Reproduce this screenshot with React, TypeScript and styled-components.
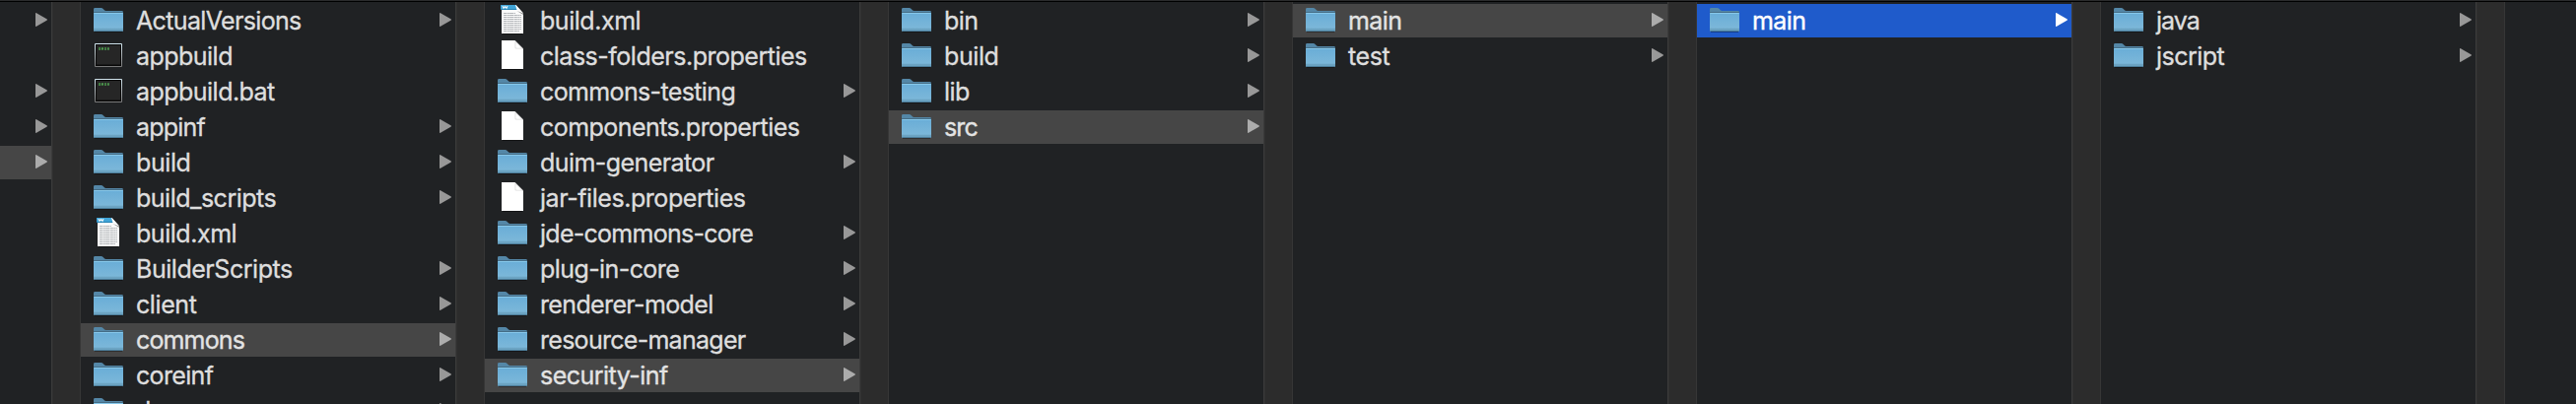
import React from 'react';
import styled, { createGlobalStyle } from 'styled-components';

const GlobalStyle = createGlobalStyle`
  html, body { margin: 0; padding: 0; background: #202224; overflow: hidden; }
`;

type Kind = 'folder' | 'exec' | 'word' | 'file';
type Highlight = 'none' | 'path' | 'active';
interface Entry { name: string; kind?: Kind; highlight?: Highlight; spacing?: number; blank?: boolean }

const Browser = styled.main`
  width: 2614px;
  height: 410px;
  box-sizing: border-box;
  border-top: 1px solid #2b2c2d;
  display: flex;
  overflow: hidden;
  background: #202224;
  font-family: Inter, 'Liberation Sans', sans-serif;
`;

const Pane = styled.section<{ $width: number }>`
  flex: 0 0 ${p => p.$width}px;
  box-sizing: border-box;
  height: 409px;
  padding-top: 2px;
  border-top: 1px solid #000;
  display: flex;
  flex-direction: column;
  gap: 2px;
  overflow: hidden;
`;

const Divider = styled.div`
  flex: 0 0 30px;
  box-sizing: border-box;
  height: 409px;
  border-top: 1px solid #000;
  background: linear-gradient(90deg, #3b3b3b 0 1px, #303030 1px 2px, #2c2c2c 2px 29px, #363636 29px);
`;

const rowColors: Record<Highlight, string> = { none: 'transparent', path: '#464646', active: '#1f5bcb' };

const Row = styled.div<{ $highlight: Highlight }>`
  flex: 0 0 34px;
  height: 34px;
  box-sizing: border-box;
  padding: 0 4px 0 11px;
  display: flex;
  align-items: center;
  background: ${p => rowColors[p.$highlight]};
  color: ${p => (p.$highlight === 'active' ? '#fff' : p.$highlight === 'path' ? '#e3e3e3' : '#dedede')};
`;

const IconSlot = styled.span`
  flex: 0 0 34px;
  height: 34px;
  margin-right: 11px;
  svg { display: block; }
`;

const Label = styled.span<{ $spacing: number }>`
  flex: 1;
  white-space: nowrap;
  font-size: 25px;
  line-height: 34px;
  letter-spacing: ${p => p.$spacing}px;
  -webkit-text-stroke: 0.35px currentColor;
`;

const ArrowSlot = styled.span`
  flex: 0 0 12px;
  height: 34px;
  margin-left: auto;
  svg { display: block; }
`;

const GradientSheet = styled.svg`
  position: absolute;
  width: 0;
  height: 0;
`;

function IconDefs() {
  return (
    <GradientSheet aria-hidden>
      <defs>
        <linearGradient id="folderFace" x1="0" y1="0" x2="0" y2="1">
          <stop offset="0" stopColor="#69add7" />
          <stop offset="0.8" stopColor="#7bb7d9" />
          <stop offset="0.86" stopColor="#6ba3c2" />
          <stop offset="1" stopColor="#6aa3c2" />
        </linearGradient>
        <linearGradient id="frame" x1="0" y1="0" x2="0" y2="1">
          <stop offset="0" stopColor="#d4e9f2" />
          <stop offset="0.5" stopColor="#a9b0b4" />
          <stop offset="1" stopColor="#777" />
        </linearGradient>
      </defs>
    </GradientSheet>
  );
}

function FolderIcon() {
  return (
    <svg width="34" height="34" viewBox="0 0 34 34">
      <path d="M3 28.5h28" stroke="#000" strokeOpacity=".3" />
      <path d="M2 14V5.400Q2 4 3.400 4H9.600Q10.700 4 11.400 4.700L12.900 6.300Q13.500 7 14.500 7H30.600Q32 7 32 8.400V14Z" fill="#5487a7" />
      <path d="M2 10.500H32V12H2Z" fill="#456d86" />
      <path d="M2 8H32V9H2Z" fill="#456d86" />
      <path d="M2 9H32V27Q32 28 31 28H3Q2 28 2 27Z" fill="url(#folderFace)" />
      <path d="M2.500 9.500H31.500" stroke="#87c8ea" />
      <path d="M2.500 27.500H31.500" stroke="#4c7d9a" />
    </svg>
  );
}

function ExecIcon() {
  return (
    <svg width="34" height="34" viewBox="0 0 34 34">
      <rect x="3" y="4" width="28" height="24" rx="1" fill="url(#frame)" />
      <rect x="4" y="5" width="26" height="22" fill="#080808" />
      <rect x="5" y="6" width="24" height="19.500" fill="#262626" />
      <path d="M7 9.500h2.200M10 9.500h2M13 9.500h2M16 9.500h1.800" stroke="#4f9a50" strokeWidth="2.400" />
      <path d="M7 9.300h2.200M10.800 10.500h1M13 9.300h2" stroke="#2c5c2e" strokeWidth=".6" />
    </svg>
  );
}

function FileIcon() {
  return (
    <svg width="34" height="34" viewBox="0 0 34 34">
      <path d="M7 30.500h20" stroke="#000" strokeOpacity=".4" />
      <path d="M6 1H19.500L28 9.500V30H6Z" fill="#fff" />
      <path d="M19.500 1L28 9.500H20.500Q19.500 9.500 19.500 8.500Z" fill="#dedede" />
      <path d="M20.400 3.200L26 8.700H21.300Q20.400 8.700 20.400 8Z" fill="#fff" />
    </svg>
  );
}

function WordIcon() {
  return (
    <svg width="34" height="34" viewBox="0 0 34 34">
      <path d="M7 30.500h20" stroke="#000" strokeOpacity=".4" />
      <path d="M6 1H20.500L28 9.500V30H6Z" fill="#fafafa" />
      <path d="M5 1H20L21.500 6H5Z" fill="#41a5d8" />
      <path d="M5 5.500H21.500" stroke="#2582b4" />
      <path d="M7 2L8 4.500L9.500 2.500L11 4.500L12 2" fill="none" stroke="#e6f4fb" strokeWidth="1.100" />
      <path d="M20.500 1L28 9.500L22 7.500Z" fill="#fff" />
      <path d="M21.500 7L28 9.500V11Z" fill="#909090" />
      <path d="M8 9.500H20M8 11.500H26M8 13.500H26M8 15.500H26M8 17.500H26M8 19.500H26M8 21.500H26M8 23.500H26M8 25.500H26M8 27.500H24" stroke="#a9adb0" strokeDasharray="3.300 .4 2.100 .3 4 .5" strokeWidth=".9" />
    </svg>
  );
}

const icons: Record<Kind, () => React.JSX.Element> = { folder: FolderIcon, exec: ExecIcon, word: WordIcon, file: FileIcon };

function Arrow({ highlight }: { highlight: Highlight }) {
  const fill = highlight === 'active' ? '#fff' : highlight === 'path' ? '#acacac' : '#989898';
  return (
    <ArrowSlot>
      <svg width="12" height="34" viewBox="0 0 12 34">
        <path d="M0 9.800Q0 8.800 1 9.200L11.400 15.300Q12.500 16 11.400 16.700L1 22.800Q0 23.200 0 22.200Z" fill={fill} />
      </svg>
    </ArrowSlot>
  );
}

function EntryRow({ name, kind = 'folder', highlight = 'none', spacing = -0.5, blank }: Entry) {
  const Icon = icons[kind];
  if (blank) return <Row $highlight="none" />;
  return (
    <Row $highlight={highlight}>
      {name && <IconSlot><Icon /></IconSlot>}
      {name && <Label $spacing={spacing}>{name}</Label>}
      {kind === 'folder' && <Arrow highlight={highlight} />}
    </Row>
  );
}

const edge: Entry[] = [
  { name: '' }, { name: '', blank: true }, { name: '' }, { name: '' }, { name: '', highlight: 'path' },
];

const columns: Entry[][] = [
  [
    { name: 'ActualVersions', spacing: -0.65 },
    { name: 'appbuild', kind: 'exec', spacing: -0.53 },
    { name: 'appbuild.bat', kind: 'exec', spacing: -0.53 },
    { name: 'appinf', spacing: -0.8 },
    { name: 'build', spacing: -0.4 },
    { name: 'build_scripts', spacing: -0.5 },
    { name: 'build.xml', kind: 'word', spacing: -0.46 },
    { name: 'BuilderScripts', spacing: -0.46 },
    { name: 'client', spacing: -0.42 },
    { name: 'commons', highlight: 'path', spacing: -0.85 },
    { name: 'coreinf', spacing: -0.66 },
    { name: 'docs' },
  ],
  [
    { name: 'build.xml', kind: 'word', spacing: -0.46 },
    { name: 'class-folders.properties', kind: 'file', spacing: -0.49 },
    { name: 'commons-testing', spacing: -0.63 },
    { name: 'components.properties', kind: 'file', spacing: -0.55 },
    { name: 'duim-generator', spacing: -0.57 },
    { name: 'jar-files.properties', kind: 'file', spacing: -0.44 },
    { name: 'jde-commons-core', spacing: -0.73 },
    { name: 'plug-in-core', spacing: -0.58 },
    { name: 'renderer-model', spacing: -0.64 },
    { name: 'resource-manager', spacing: -0.72 },
    { name: 'security-inf', highlight: 'path', spacing: -0.53 },
  ],
  [
    { name: 'bin', spacing: -0.5 },
    { name: 'build', spacing: -0.4 },
    { name: 'lib', spacing: -0.5 },
    { name: 'src', highlight: 'path', spacing: -0.9 },
  ],
  [{ name: 'main', highlight: 'path', spacing: -0.6 }, { name: 'test', spacing: -0.4 }],
  [{ name: 'main', highlight: 'active', spacing: -0.6 }],
  [{ name: 'java', spacing: -0.95 }, { name: 'jscript', spacing: -0.55 }],
];

export default function App() {
  return (
    <>
      <GlobalStyle />
      <IconDefs />
      <Browser>
        <Pane $width={52}>{edge.map((e, i) => <EntryRow key={i} {...e} />)}</Pane>
        <Divider />
        {columns.map((entries, c) => (
          <React.Fragment key={c}>
            <Pane $width={380}>{entries.map((e, i) => <EntryRow key={i} {...e} />)}</Pane>
            <Divider />
          </React.Fragment>
        ))}
        <Pane $width={72} />
      </Browser>
    </>
  );
}
